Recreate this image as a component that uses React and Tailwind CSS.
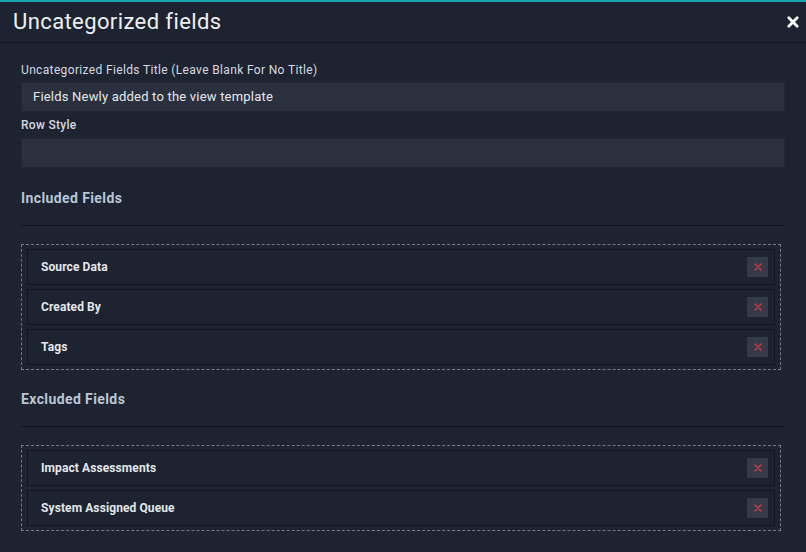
import React from "react";

const included = ["Source Data", "Created By", "Tags"];
const excluded = ["Impact Assessments", "System Assigned Queue"];

function XIcon({ className }) {
  return (
    <svg viewBox="0 0 10 10" className={className} fill="none" stroke="currentColor" strokeWidth="1.4" strokeLinecap="round">
      <path d="M2 2 L8 8 M8 2 L2 8" />
    </svg>
  );
}

function FieldRow({ name }) {
  return (
    <div className="h-[36px] flex items-center justify-between bg-[#1d2330] border border-[#11151d] pl-[13px] pr-[6px]">
      <span className="text-[12px] font-bold text-[#e4e7ec] tracking-[0.1px]">{name}</span>
      <button className="w-[21px] h-[20px] bg-[#343a47] flex items-center justify-center">
        <XIcon className="w-[10px] h-[10px] text-[#d63a44]" />
      </button>
    </div>
  );
}

function FieldGroup({ title, items }) {
  return (
    <div>
      <div className="text-[14px] font-bold text-[#b9c6d6] tracking-[0.4px] h-[20px] leading-[20px]">{title}</div>
      <div className="border-t border-[#10141b] mt-[17px] mb-[18px] mr-[1px]"></div>
      <div className="border border-dashed border-[#737a86] mr-[4px] px-[5px] py-[4px] flex flex-col gap-[4px]">
        {items.map((n) => (
          <FieldRow key={n} name={n} />
        ))}
      </div>
    </div>
  );
}

export default function App() {
  return (
    <div
      className="w-[806px] h-[552px] bg-[#1d2330] border-t-2 border-[#1aa6a8] overflow-hidden"
      style={{ fontFamily: "Roboto, 'Noto Sans', sans-serif" }}
    >
      <div className="h-[41px] flex items-center justify-between pl-[13px] pr-[6px] border-b border-[#11151d]">
        <span className="text-[22px] text-[#eef0f3] leading-none tracking-[0.4px]">Uncategorized fields</span>
        <XIcon className="w-[14px] h-[14px] text-white stroke-[2]" />
      </div>
      <div className="px-[21px] pt-[19px]">
        <div className="text-[12px] text-[#d5d9e0] h-[16px] leading-[16px] tracking-[0.35px]">
          Uncategorized Fields Title (Leave Blank For No Title)
        </div>
        <div className="mt-[4px] h-[30px] bg-[#2a303d] border border-[#222733] flex items-center px-[11px] text-[13px] text-[#e4e7ec] tracking-[0.2px]">
          Fields Newly added to the view template
        </div>
        <div className="mt-[5px] text-[12px] font-medium text-[#d5d9e0] h-[16px] leading-[16px] tracking-[0.3px]">Row Style</div>
        <div className="mt-[5px] h-[30px] bg-[#2a303d] border border-[#222733]"></div>
        <div className="mt-[20px]">
          <FieldGroup title="Included Fields" items={included} />
        </div>
        <div className="mt-[19px]">
          <FieldGroup title="Excluded Fields" items={excluded} />
        </div>
      </div>
    </div>
  );
}
